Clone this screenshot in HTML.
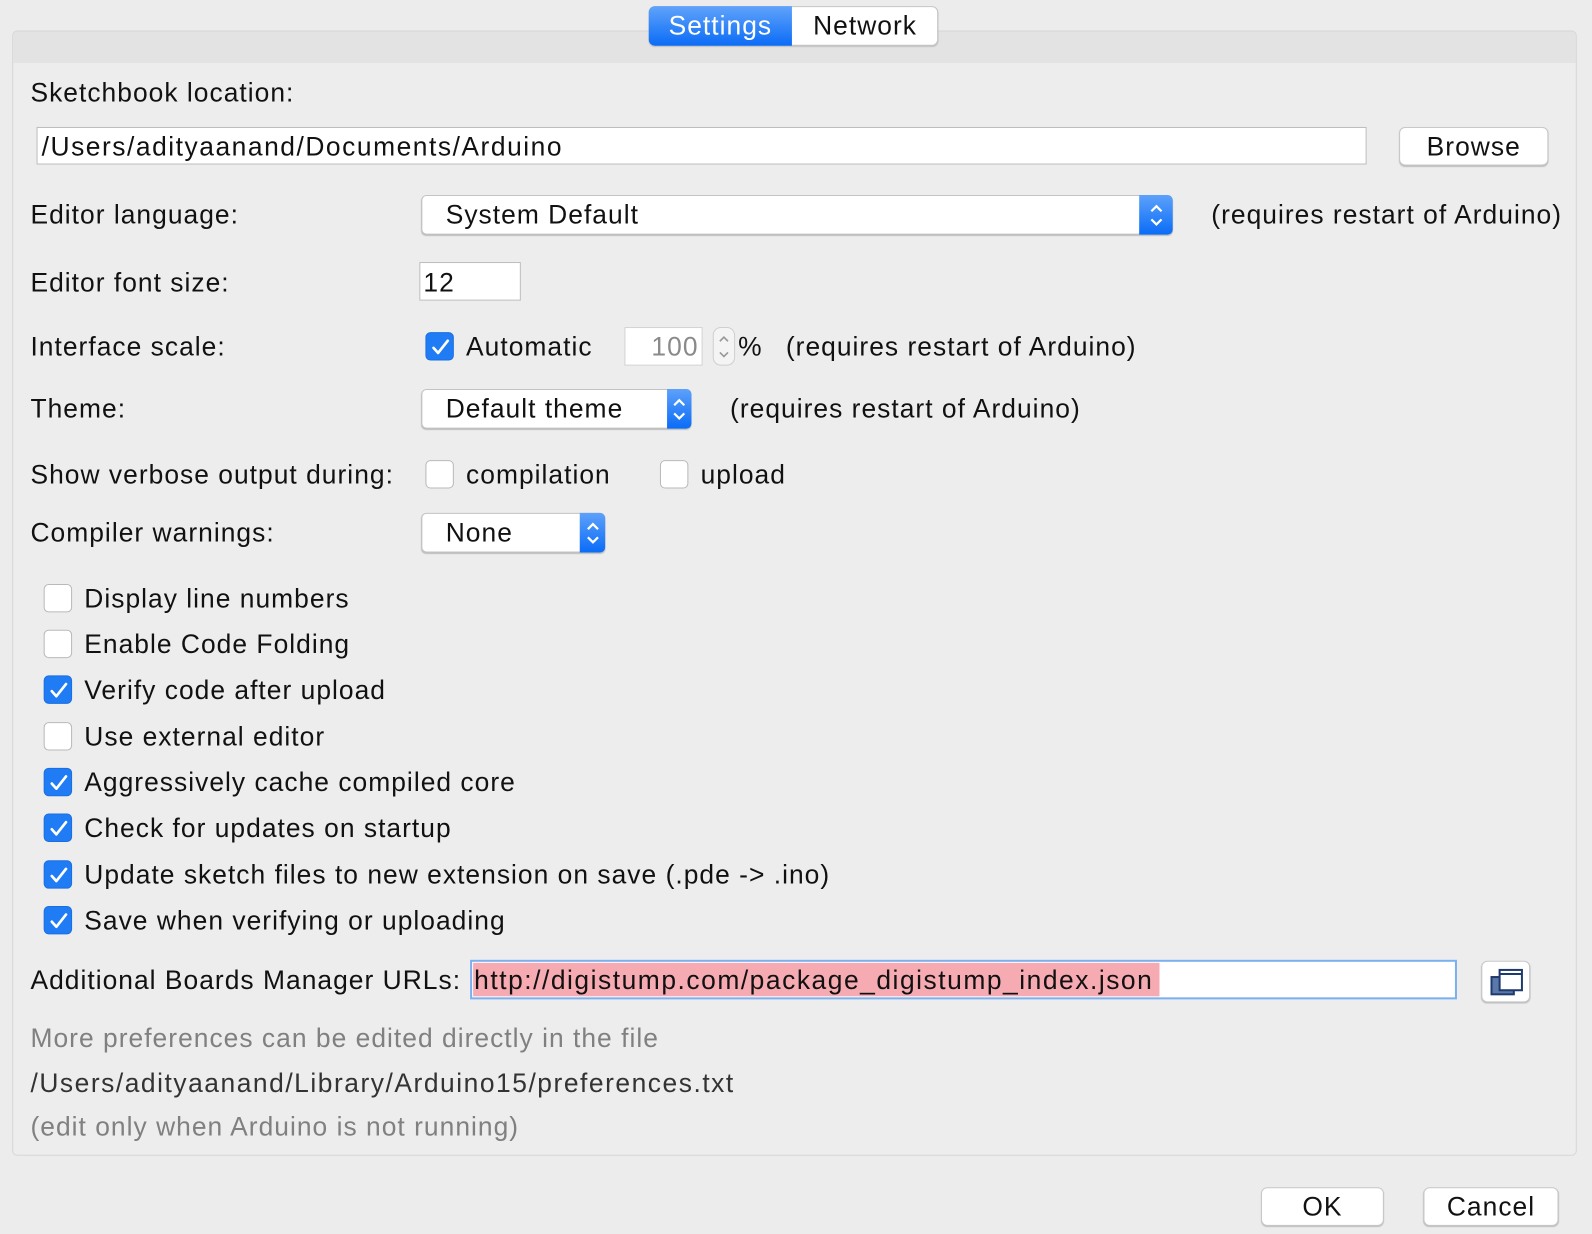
<!DOCTYPE html>
<html><head><meta charset="utf-8"><style>
html,body{margin:0;padding:0;background:#ececec;overflow:hidden;width:1592px;height:1234px}
#r{position:absolute;left:0;top:0;width:1568px;height:1215px;transform:scale(1.01531,1.01564);transform-origin:0 0;font-family:"Liberation Sans",sans-serif;font-size:26px;color:#111;letter-spacing:1px}
.a{position:absolute}
.t{position:absolute;height:40px;line-height:40px;white-space:nowrap}
.p{letter-spacing:1.5px}
.g{color:#808080}
.f{position:absolute;background:#fff;border:1px solid #bdbdbd;box-sizing:border-box}
.btn{position:absolute;background:#fff;border:1px solid #c8c8c8;border-radius:6px;box-sizing:border-box;box-shadow:0 1px 1px rgba(0,0,0,.2);text-align:center}
.cb{position:absolute;width:28px;height:28px;border-radius:5px;box-sizing:border-box;background:#fff;border:1px solid #b9b9b9}
.cb.on{background:#1f7cf5;border:1px solid #1a6fe0}
.cb.on svg{position:absolute;left:4px;top:4px}
.combo{position:absolute;background:#fff;border:1px solid #c3c3c3;border-radius:5px;box-sizing:border-box;box-shadow:0 1px 1px rgba(0,0,0,.2)}
.combo .b{position:absolute;right:-1px;top:-1px;bottom:-1px;width:33px;border-radius:0 5px 5px 0;background:linear-gradient(#5da1fb,#0a6cf7)}
.combo .b svg{position:absolute;left:50%;top:50%;transform:translate(-50%,-50%)}
</style></head><body><div id="r">
<div class="a" style="left:12px;top:30px;width:1541px;height:1108px;border:1px solid #d6d6d6;border-radius:5px;background:#ededed;box-sizing:border-box"></div>
<div class="a" style="left:13px;top:31px;width:1539px;height:31px;background:#e3e3e3;border-radius:4px 4px 0 0"></div>
<div class="a" style="left:639px;top:6px;width:285px;height:39px;border-radius:6px;border:1px solid #c6c6c6;box-sizing:border-box;background:#fff;box-shadow:0 1px 1px rgba(0,0,0,.15)"></div>
<div class="a" style="left:639px;top:6px;width:141px;height:39px;border-radius:6px 0 0 6px;background:linear-gradient(#60a3fb,#0b6cf6)"></div>
<div class="t" style="left:639px;width:141px;top:5px;text-align:center;color:#fff">Settings</div>
<div class="t" style="left:780px;width:144px;top:5px;text-align:center">Network</div>

<div class="t" style="left:30px;top:71px">Sketchbook location:</div>
<div class="f" style="left:36px;top:125px;width:1310px;height:37px"></div>
<div class="t p" style="left:41px;top:124px">/Users/adityaanand/Documents/Arduino</div>
<div class="btn" style="left:1378px;top:125px;width:147px;height:38px;line-height:36px">Browse</div>

<div class="t" style="left:30px;top:191px">Editor language:</div>
<div class="combo" style="left:415px;top:192px;width:740px;height:39px"><div class="b"><svg width="16" height="28" viewBox="0 0 16 28"><path d="M3 10l5-5 5 5M3 18l5 5 5-5" fill="none" stroke="#fff" stroke-width="2.2"/></svg></div></div>
<div class="t" style="left:439px;top:191px">System Default</div>
<div class="t" style="left:1193px;top:191px">(requires restart of Arduino)</div>

<div class="t" style="left:30px;top:258px">Editor font size:</div>
<div class="f" style="left:413px;top:258px;width:100px;height:38px"></div>
<div class="t" style="left:417px;top:258px">12</div>

<div class="t" style="left:30px;top:321px">Interface scale:</div>
<div class="cb on" style="left:419px;top:327px"><svg width="20" height="20" viewBox="0 0 20 20"><path d="M3 10.5l4.5 5L17 3.5" fill="none" stroke="#fff" stroke-width="2.6" stroke-linecap="round" stroke-linejoin="round"/></svg></div>
<div class="t" style="left:459px;top:321px">Automatic</div>
<div class="f" style="left:615px;top:322px;width:77px;height:38px;border-color:#d2d2d2"></div>
<div class="t g" style="left:615px;width:73px;top:321px;text-align:right;color:#8a8a8a">100</div>
<div class="a" style="left:702px;top:322px;width:22px;height:38px;border:1px solid #cfcfcf;border-radius:8px;box-sizing:border-box;background:#f4f4f4"><svg width="20" height="36" viewBox="0 0 20 36" style="position:absolute;left:0;top:0"><path d="M6 13l4-4 4 4M6 24l4 4 4-4" fill="none" stroke="#999" stroke-width="1.6"/></svg></div>
<div class="t" style="left:727px;top:321px">%</div>
<div class="t" style="left:774px;top:321px">(requires restart of Arduino)</div>

<div class="t" style="left:30px;top:382px">Theme:</div>
<div class="combo" style="left:415px;top:383px;width:266px;height:39px"><div class="b" style="width:24px"><svg width="16" height="28" viewBox="0 0 16 28"><path d="M3 10l5-5 5 5M3 18l5 5 5-5" fill="none" stroke="#fff" stroke-width="2.2"/></svg></div></div>
<div class="t" style="left:439px;top:382px">Default theme</div>
<div class="t" style="left:719px;top:382px">(requires restart of Arduino)</div>

<div class="t" style="left:30px;top:447px">Show verbose output during:</div>
<div class="cb" style="left:419px;top:453px"></div>
<div class="t" style="left:459px;top:447px">compilation</div>
<div class="cb" style="left:650px;top:453px"></div>
<div class="t" style="left:690px;top:447px">upload</div>

<div class="t" style="left:30px;top:504px">Compiler warnings:</div>
<div class="combo" style="left:415px;top:505px;width:181px;height:39px"><div class="b" style="width:25px"><svg width="16" height="28" viewBox="0 0 16 28"><path d="M3 10l5-5 5 5M3 18l5 5 5-5" fill="none" stroke="#fff" stroke-width="2.2"/></svg></div></div>
<div class="t" style="left:439px;top:504px">None</div>

<div class="cb" style="left:43px;top:575px"></div><div class="t" style="left:83px;top:569px">Display line numbers</div>
<div class="cb" style="left:43px;top:620px"></div><div class="t" style="left:83px;top:614px">Enable Code Folding</div>
<div class="cb on" style="left:43px;top:665px"><svg width="20" height="20" viewBox="0 0 20 20"><path d="M3 10.5l4.5 5L17 3.5" fill="none" stroke="#fff" stroke-width="2.6" stroke-linecap="round" stroke-linejoin="round"/></svg></div><div class="t" style="left:83px;top:659px">Verify code after upload</div>
<div class="cb" style="left:43px;top:711px"></div><div class="t" style="left:83px;top:705px">Use external editor</div>
<div class="cb on" style="left:43px;top:756px"><svg width="20" height="20" viewBox="0 0 20 20"><path d="M3 10.5l4.5 5L17 3.5" fill="none" stroke="#fff" stroke-width="2.6" stroke-linecap="round" stroke-linejoin="round"/></svg></div><div class="t" style="left:83px;top:750px">Aggressively cache compiled core</div>
<div class="cb on" style="left:43px;top:801px"><svg width="20" height="20" viewBox="0 0 20 20"><path d="M3 10.5l4.5 5L17 3.5" fill="none" stroke="#fff" stroke-width="2.6" stroke-linecap="round" stroke-linejoin="round"/></svg></div><div class="t" style="left:83px;top:795px">Check for updates on startup</div>
<div class="cb on" style="left:43px;top:847px"><svg width="20" height="20" viewBox="0 0 20 20"><path d="M3 10.5l4.5 5L17 3.5" fill="none" stroke="#fff" stroke-width="2.6" stroke-linecap="round" stroke-linejoin="round"/></svg></div><div class="t" style="left:83px;top:841px">Update sketch files to new extension on save (.pde -&gt; .ino)</div>
<div class="cb on" style="left:43px;top:892px"><svg width="20" height="20" viewBox="0 0 20 20"><path d="M3 10.5l4.5 5L17 3.5" fill="none" stroke="#fff" stroke-width="2.6" stroke-linecap="round" stroke-linejoin="round"/></svg></div><div class="t" style="left:83px;top:886px">Save when verifying or uploading</div>

<div class="t" style="left:30px;top:945px">Additional Boards Manager URLs:</div>
<div class="f" style="left:463px;top:945px;width:972px;height:39px;border:2px solid #7ab0ee"></div>
<div class="a" style="left:466px;top:948px;width:676px;height:33px;background:#f6aab2"></div>
<div class="t p" style="left:467px;top:945px">http://digistump.com/package_digistump_index.json</div>
<div class="btn" style="left:1459px;top:946px;width:48px;height:41px"><svg width="32" height="28" viewBox="0 0 32 28" style="position:absolute;left:8px;top:6px"><rect x="1" y="9" width="22" height="17" fill="#5a79aa" stroke="#1f3b6d" stroke-width="2"/><rect x="9" y="2" width="22" height="20" fill="#fff" stroke="#1f3b6d" stroke-width="2"/><line x1="9" y1="6" x2="31" y2="6" stroke="#1f3b6d" stroke-width="2"/></svg></div>

<div class="t g" style="left:30px;top:1002px">More preferences can be edited directly in the file</div>
<div class="t p" style="left:30px;top:1046px;color:#333">/Users/adityaanand/Library/Arduino15/preferences.txt</div>
<div class="t g" style="left:30px;top:1089px">(edit only when Arduino is not running)</div>

<div class="btn" style="left:1242px;top:1169px;width:121px;height:38px;line-height:36px">OK</div>
<div class="btn" style="left:1402px;top:1169px;width:133px;height:38px;line-height:36px">Cancel</div>
</div></body></html>
